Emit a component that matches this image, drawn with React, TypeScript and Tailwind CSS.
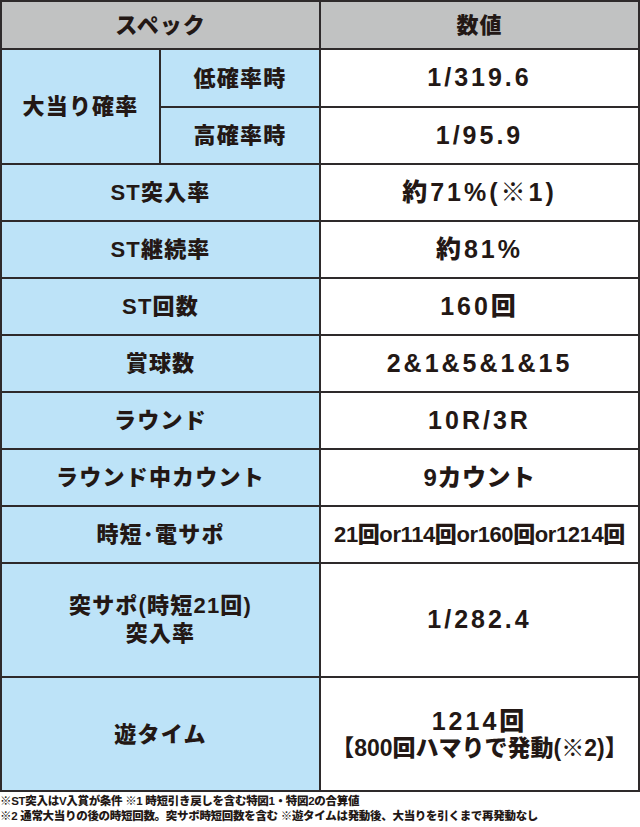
import React from "react";

const FONT = { fontFamily: '"Liberation Sans", "Noto Sans CJK JP", sans-serif' };

const cellBase =
  "flex items-center justify-center text-center border-r-2 border-b-2 border-[#2e2a2b] font-black text-[#231815]";
const labelCls = `${cellBase} bg-[#bde3f8] text-[22px] tracking-[1.2px]`;
const valueBase = `${cellBase} bg-white`;
const valueDefault = "text-[25px] tracking-[3px]";

type Row = { label: React.ReactNode; value: React.ReactNode; tall?: boolean; valueCls?: string };

const rows: Row[] = [
  { label: "ST突入率", value: "約71%(※1)" },
  { label: "ST継続率", value: "約81%" },
  { label: "ST回数", value: "160回" },
  { label: "賞球数", value: "2&1&5&1&15" },
  { label: "ラウンド", value: "10R/3R" },
  { label: "ラウンド中カウント", value: "9カウント", valueCls: "text-[24px] tracking-[0.5px]" },
  {
    label: "時短･電サポ",
    value: <span className="whitespace-nowrap">21回or114回or160回or1214回</span>,
    valueCls: "text-[22px] tracking-[-0.4px]",
  },
  {
    label: (
      <span className="leading-[28px]">
        突サポ(時短21回)
        <br />
        突入率
      </span>
    ),
    value: "1/282.4",
    tall: true,
  },
  {
    label: "遊タイム",
    value: (
      <span className="leading-[26px] text-[25px]">
        <span className="tracking-[3px]">1214回</span>
        <br />
        <span className="text-[23px] tracking-[0px]">【800回ハマりで発動(※2)】</span>
      </span>
    ),
    tall: true,
    valueCls: "tracking-[0px]",
  },
];

export default function App() {
  return (
    <div className="w-[640px] h-[827px] bg-white" style={FONT}>
      <div className="grid grid-cols-[159px_160px_1fr] border-t-2 border-l-2 border-[#2e2a2b]">
        <div className={`${cellBase} col-span-2 h-[48px] bg-[#c1c2c2] text-[22px] tracking-[1px]`}>スペック</div>
        <div className={`${cellBase} h-[48px] bg-[#c1c2c2] text-[22px] tracking-[1px]`}>数値</div>

        <div className={`${labelCls} row-span-2`}>大当り確率</div>
        <div className={`${labelCls} h-[58px]`}>低確率時</div>
        <div className={`${valueBase} ${valueDefault} h-[58px]`}>1/319.6</div>
        <div className={`${labelCls} h-[57px]`}>高確率時</div>
        <div className={`${valueBase} ${valueDefault} h-[57px]`}>1/95.9</div>

        {rows.map((r, i) => (
          <React.Fragment key={i}>
            <div className={`${labelCls} col-span-2 ${r.tall ? "h-[114px]" : "h-[57px]"}`}>{r.label}</div>
            <div className={`${valueBase} ${r.tall ? "h-[114px]" : "h-[57px]"} ${r.valueCls ?? valueDefault}`}>
              {r.value}
            </div>
          </React.Fragment>
        ))}
      </div>
      <div className="pt-[2px] text-[11.5px] leading-[15px] tracking-[-0.3px] font-black text-[#231815] whitespace-nowrap">
        <div>※ST突入はV入賞が条件 ※1 時短引き戻しを含む特図1・特図2の合算値</div>
        <div>※2 通常大当りの後の時短回数。突サポ時短回数を含む ※遊タイムは発動後、大当りを引くまで再発動なし</div>
      </div>
    </div>
  );
}
